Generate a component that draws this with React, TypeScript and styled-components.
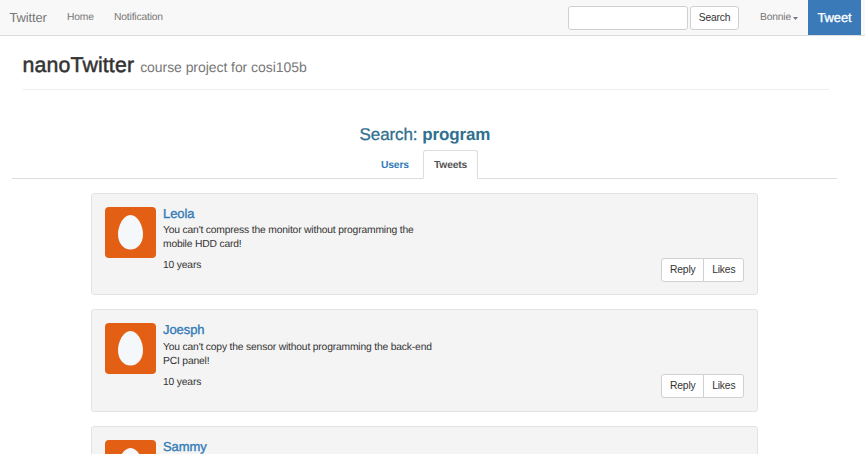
import React from "react";
import styled, { createGlobalStyle } from "styled-components";

const GlobalStyle = createGlobalStyle`
  * { box-sizing: border-box; }
  html, body { margin: 0; overflow: hidden; height: 454px; background: #fff; }
  body {
    font: 10.3px/14px "Liberation Sans", Arial, sans-serif;
    letter-spacing: -0.17px;
    color: #333;
    text-rendering: geometricPrecision;
  }
  a { text-decoration: none; color: inherit; }
  h1, h2, h3, p { margin: 0; }
`;

const Page = styled.div`
  height: 454px;
  overflow: hidden;
`;

const Navbar = styled.nav`
  height: 36px;
  display: flex;
  align-items: center;
  background: #f8f8f8;
  border-bottom: 1px solid #dcdcdc;
  padding: 0 4px 0 9.5px;
  color: #777;
`;

const Brand = styled.a`
  width: 57.5px;
  font-size: 13px;
  letter-spacing: -0.15px;
`;

const NavLink = styled.a<{ $width: number }>`
  width: ${(p) => p.$width}px;
  padding-top: 1.5px;
`;

const SearchForm = styled.form`
  display: flex;
  gap: 2.5px;
  margin-left: auto;
`;

const SearchInput = styled.input`
  width: 120px;
  height: 24px;
  border: 1px solid #d0d0d0;
  border-radius: 3px;
  background: #fff;
  outline: none;
`;

const Button = styled.button<{ $width: number }>`
  width: ${(p) => p.$width}px;
  height: 24px;
  padding: 0;
  border: 1px solid #d0d0d0;
  border-radius: 3px;
  background: #fff;
  color: #333;
  font: inherit;
  letter-spacing: inherit;
`;

const UserMenu = styled.a`
  display: flex;
  align-items: center;
  gap: 1.5px;
  width: 48px;
  margin-left: 21px;
  padding-top: 1.5px;
`;

const Caret = styled.svg`
  width: 5px;
  height: 3px;
  fill: #777;
`;

const TweetButton = styled.a`
  display: flex;
  align-items: center;
  justify-content: center;
  width: 53px;
  height: 35px;
  background: #3b7ab9;
  color: #fff;
  font-size: 13px;
  letter-spacing: -0.15px;
  -webkit-text-stroke: 0.3px #fff;
`;

const PageHeader = styled.header`
  display: flex;
  align-items: baseline;
  gap: 6px;
  height: 54px;
  margin: 0 36px 0 22.5px;
  padding-top: 16.5px;
  border-bottom: 1px solid #eee;
`;

const SiteTitle = styled.h1`
  font-size: 21.3px;
  letter-spacing: 0.14px;
  line-height: 24px;
  font-weight: 400;
  -webkit-text-stroke: 0.5px #333;
`;

const Subtitle = styled.span`
  font-size: 14px;
  letter-spacing: -0.06px;
  color: #777;
`;

const ResultsTitle = styled.h2`
  margin: 35px 15px 0 0;
  height: 25px;
  line-height: 20px;
  text-align: center;
  font-size: 17px;
  letter-spacing: -0.1px;
  font-weight: 400;
  color: #31708f;
  -webkit-text-stroke: 0.3px #31708f;

  strong { -webkit-text-stroke: 0; }
`;

const Tabs = styled.div`
  display: flex;
  height: 29px;
  margin: 0 28px 0 12px;
  padding-left: 358px;
  border-bottom: 1px solid #ddd;
  font-weight: 700;
`;

const Tab = styled.a<{ $active?: boolean }>`
  width: ${(p) => (p.$active ? 55 : 53)}px;
  height: 29px;
  line-height: 29px;
  padding-left: 10px;
  color: ${(p) => (p.$active ? "#555" : "#337ab7")};
  border: 1px solid ${(p) => (p.$active ? "#ddd" : "transparent")};
  border-bottom-color: ${(p) => (p.$active ? "#fff" : "transparent")};
  border-radius: 3px 3px 0 0;
`;

const Feed = styled.main`
  display: grid;
  gap: 14px;
  width: 667px;
  margin: 13.6px 0 0 91.3px;
`;

const Card = styled.article`
  display: flex;
  height: 102.7px;
  padding: 13px;
  border: 1px solid #e3e3e3;
  border-radius: 3px;
  background: #f4f4f4;
`;

const Avatar = styled.svg`
  flex: none;
  width: 51px;
  height: 51px;
  margin-right: 6.7px;
`;

const Message = styled.div`
  flex: 1;
`;

const Author = styled.h3`
  height: 17.3px;
  line-height: 13.4px;
  font-size: 13px;
  letter-spacing: -0.06px;
  font-weight: 400;
  color: #337ab7;
  -webkit-text-stroke: 0.35px #337ab7;
`;

const Body = styled.p`
  white-space: pre-line;
  margin-bottom: 7px;
`;

const Actions = styled.div`
  display: flex;
  align-self: flex-end;
  margin-bottom: -0.4px;

  button:first-child { border-radius: 3px 0 0 3px; }
  button:last-child { border-radius: 0 3px 3px 0; margin-left: -1px; }
`;

const tweets = [
  { author: "Leola", text: "You can't compress the monitor without programming the\nmobile HDD card!" },
  { author: "Joesph", text: "You can't copy the sensor without programming the back-end\nPCI panel!" },
  { author: "Sammy", text: "" },
];

export default function App() {
  return (
    <Page>
      <GlobalStyle />
      <Navbar>
        <Brand>Twitter</Brand>
        <NavLink $width={47}>Home</NavLink>
        <NavLink $width={70}>Notification</NavLink>
        <SearchForm>
          <SearchInput aria-label="Search" />
          <Button type="button" $width={49}>Search</Button>
        </SearchForm>
        <UserMenu>
          Bonnie
          <Caret viewBox="0 0 5 3"><path d="M0 0H5L2.500 3Z" /></Caret>
        </UserMenu>
        <TweetButton>Tweet</TweetButton>
      </Navbar>
      <PageHeader>
        <SiteTitle>nanoTwitter</SiteTitle>
        <Subtitle>course project for cosi105b</Subtitle>
      </PageHeader>
      <ResultsTitle>Search: <strong>program</strong></ResultsTitle>
      <Tabs>
        <Tab>Users</Tab>
        <Tab $active>Tweets</Tab>
      </Tabs>
      <Feed>
        {tweets.map((t) => (
          <Card key={t.author}>
            <Avatar viewBox="0 0 51 51">
              <rect width="51" height="51" rx="4" fill="#e35f14" />
              <path d="M25.500 8C32.500 8 38 18.500 38 27C38 36.500 32.500 42.500 25.500 42.500S13 36.500 13 27C13 18.500 18.500 8 25.500 8Z" fill="#f4f8fb" />
            </Avatar>
            <Message>
              <Author>{t.author}</Author>
              {t.text && <Body>{t.text}</Body>}
              {t.text && <p>10 years</p>}
            </Message>
            {t.text && (
              <Actions>
                <Button $width={43}>Reply</Button>
                <Button $width={41}>Likes</Button>
              </Actions>
            )}
          </Card>
        ))}
      </Feed>
    </Page>
  );
}
